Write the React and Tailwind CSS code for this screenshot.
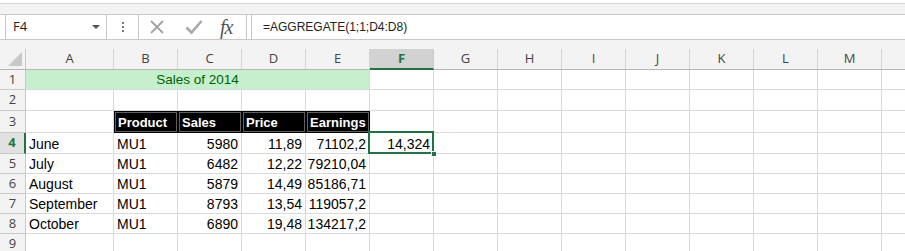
import React from "react";

const COLS = ["A", "B", "C", "D", "E", "F", "G", "H", "I", "J", "K", "L", "M"];
const W = [88, 64, 64, 64, 64, 64, 64, 64, 64, 64, 64, 64, 64];

const rows = [
	["June", "MU1", "5980", "11,89", "71102,2"],
	["July", "MU1", "6482", "12,22", "79210,04"],
	["August", "MU1", "5879", "14,49", "85186,71"],
	["September", "MU1", "8793", "13,54", "119057,2"],
	["October", "MU1", "6890", "19,48", "134217,2"],
];

const RowHead = ({ n, active }) => (
	<div
		className={
			active
				? "w-[26px] shrink-0 h-full flex items-center justify-center bg-[#e1e1e1] border-r-2 border-r-[#217346] border-b border-b-[#c8c8c8] text-[13px] font-bold text-[#217346] font-['Open_Sans',sans-serif]"
				: "w-[26px] shrink-0 h-full flex items-center justify-center bg-[#f3f3f3] border-r border-[#c8c8c8] border-b text-[13px] text-[#444] font-['Open_Sans',sans-serif]"
		}
	>
		{n}
	</div>
);

const Cell = ({ w, children, right, className = "" }) => (
	<div
		style={{ width: w }}
		className={
			"shrink-0 h-full border-r border-b border-[#dadada] flex items-end pb-[1px] px-[3px] leading-[16px] overflow-visible whitespace-nowrap " +
			(right ? "justify-end " : "") +
			className
		}
	>
		{children}
	</div>
);

const Filler = () => <div className="flex-1 h-full border-b border-[#dadada]" />;

const App = () => {
	return (
		<div className="w-[905px] h-[251px] overflow-hidden bg-white font-['Liberation_Sans',Arial,sans-serif] text-[14px] text-black">
			{/* ribbon remnants */}
			<div className="h-[4px] border-b border-[#d4d4d4] bg-white" />
			<div className="h-[11px] bg-[#f3f3f3] border-b border-[#c8c8c8]" />

			{/* formula bar */}
			<div className="h-[25px] flex items-stretch bg-white border-b border-[#c8c8c8]">
				<div className="ml-[5px] w-[102px] border-x border-[#c6c6c6] flex items-center justify-between pl-[7px] pr-[6px]">
					<span className="text-[13px] text-[#222] font-['Open_Sans',sans-serif]">F4</span>
					<svg width="8" height="5" viewBox="0 0 8 5">
						<path d="M0 0h8L4 4z" fill="#555" />
					</svg>
				</div>
				<div className="w-[31px] flex flex-col items-center justify-center gap-[2px]">
					<span className="w-[2px] h-[2px] bg-[#777]" />
					<span className="w-[2px] h-[2px] bg-[#777]" />
					<span className="w-[2px] h-[2px] bg-[#777]" />
				</div>
				<div className="w-[109px] border-x border-[#c6c6c6] flex items-center">
					<svg className="ml-[10px]" width="16" height="16" viewBox="0 0 16 16">
						<path d="M2 2L14 14M14 2L2 14" stroke="#a2a2a2" strokeWidth="1.8" />
					</svg>
					<svg className="ml-[20px]" width="18" height="16" viewBox="0 0 18 16">
						<path d="M1.5 8.5L6.5 13.5L16.5 2" stroke="#a8a8a8" strokeWidth="2.6" fill="none" />
					</svg>
					<span className="ml-[17px] font-['Liberation_Serif',serif] italic text-[20px] leading-none text-[#555] tracking-[-1px]">
						fx
					</span>
				</div>
				<div className="ml-[4px] flex-1 border-l border-[#c6c6c6] flex items-center pl-[11px] text-[12px] text-[#222]">
					=AGGREGATE(1;1;D4:D8)
				</div>
			</div>

			{/* gray band above headers */}
			<div className="h-[9px] bg-[#f3f3f3]" />

			{/* column headers */}
			<div className="h-[21px] flex bg-[#f3f3f3] border-b border-[#b8b8b8] font-['Open_Sans',sans-serif] text-[13px] text-[#444]">
				<div className="w-[26px] shrink-0 border-r border-[#c8c8c8] flex items-end justify-end pr-[3px] pb-[3px]">
					<svg width="14" height="14" viewBox="0 0 14 14">
						<path d="M14 0V14H0z" fill="#c8c8c8" />
					</svg>
				</div>
				{COLS.map((c, i) =>
					c === "F" ? (
						<div
							key={c}
							style={{ width: W[i] }}
							className="shrink-0 bg-[#d2d2d2] border-r border-[#c8c8c8] border-b-2 border-b-[#217346] -mb-[1px] flex items-center justify-center font-bold text-[#217346]"
						>
							{c}
						</div>
					) : (
						<div
							key={c}
							style={{ width: W[i] }}
							className="shrink-0 border-r border-[#d4d4d4] flex items-center justify-center"
						>
							{c}
						</div>
					)
				)}
				<div className="flex-1" />
			</div>

			{/* row 1 */}
			<div className="h-[20px] flex">
				<RowHead n="1" />
				<div className="w-[344px] shrink-0 h-full bg-[#c6efce] border-r border-b border-[#dadada] flex items-end justify-center pb-[1px] leading-[16px] text-[13.5px] text-[#006100]">
					Sales of 2014
				</div>
				{W.slice(5).map((w, i) => (
					<Cell key={i} w={w} />
				))}
				<Filler />
			</div>

			{/* row 2 */}
			<div className="h-[21px] flex">
				<RowHead n="2" />
				{W.map((w, i) => (
					<Cell key={i} w={w} />
				))}
				<Filler />
			</div>

			{/* row 3 */}
			<div className="h-[22px] flex">
				<RowHead n="3" />
				<Cell w={W[0]} />
				{["Product", "Sales", "Price", "Earnings"].map((t) => (
					<div
						key={t}
						className="w-[64px] shrink-0 h-full bg-black shadow-[inset_0_0_0_1px_#000,inset_0_0_0_2px_#5e5e5e] flex items-end pb-[2px] px-[4px] leading-[16px] text-white font-bold text-[13px] whitespace-nowrap"
					>
						{t}
					</div>
				))}
				{W.slice(5).map((w, i) => (
					<Cell key={i} w={w} />
				))}
				<Filler />
			</div>

			{/* data rows */}
			{rows.map((r, ri) => (
				<div key={ri} className={(ri === 0 ? "h-[21px]" : "h-[20px]") + " flex"}>
					<RowHead n={String(ri + 4)} active={ri === 0} />
					<Cell w={W[0]}>{r[0]}</Cell>
					<Cell w={W[1]}>{r[1]}</Cell>
					<Cell w={W[2]} right>{r[2]}</Cell>
					<Cell w={W[3]} right>{r[3]}</Cell>
					<Cell w={W[4]} right>{r[4]}</Cell>
					{ri === 0 ? (
						<div className="w-[64px] shrink-0 h-full relative border-r border-b border-[#dadada] flex items-end justify-end pb-[1px] px-[3px] leading-[16px]">
							14,324
							<div className="absolute -left-[2px] -top-[2px] -right-[1px] -bottom-[1px] border-2 border-[#217346] pointer-events-none" />
							<div className="absolute -right-[4px] -bottom-[4px] w-[6px] h-[6px] bg-[#217346] border border-white" />
						</div>
					) : (
						<Cell w={W[5]} />
					)}
					{W.slice(6).map((w, i) => (
						<Cell key={i} w={w} />
					))}
					<Filler />
				</div>
			))}

			{/* row 9 */}
			<div className="h-[20px] flex">
				<RowHead n="9" />
				{W.map((w, i) => (
					<Cell key={i} w={w} />
				))}
				<Filler />
			</div>
		</div>
	);
};

export default App;
